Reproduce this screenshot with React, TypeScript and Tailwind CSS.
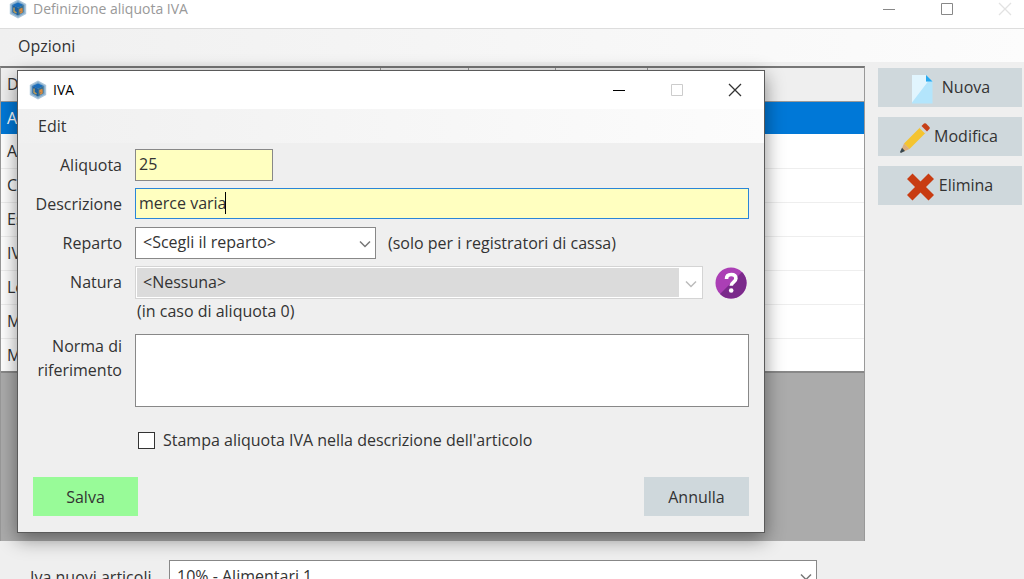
import type { ReactNode } from "react"

const rows = ["A", "A", "C", "Es", "IV", "Le", "M", "M"]

function CubeIcon() {
  return (
    <svg viewBox="0 0 18 20" className="h-5 w-[18px] shrink-0" aria-hidden="true">
      <path d="M9 0.5 17.2 5v10L9 19.5 0.8 15V5z" fill="#a9c4d9" />
      <path d="M9 2 15.8 5.8v8.4L9 18 2.2 14.2V5.8z" fill="#7fa9cb" />
      <path d="M9 3.4 14.6 6 9 8.8 3.4 6z" fill="#1b6dbb" />
      <path d="M3.4 6 9 8.8v7.6l-5.6-3.1z" fill="#1d5f9c" />
      <path d="M14.6 6 9 8.8v7.6l5.6-3.1z" fill="#3a6f8e" />
      <path d="M5 8.5v4l2.5 1.5" fill="none" stroke="#b59a5c" strokeWidth="1.5" />
      <path d="M13.5 9.3 11 10.5v1.5l2-.8v1.8l-2.3 1.2" fill="none" stroke="#d98a3d" strokeWidth="1.4" />
    </svg>
  )
}

function PageIcon() {
  return (
    <svg viewBox="0 0 30 30" className="size-[30px]" aria-hidden="true">
      <path d="M4 1H18l6.5 6.5V29.5H4z" fill="#b3e5fc" />
      <path d="M4 1H18v6.5h2L4 28.5z" fill="#e1f5fe" />
      <path d="M18 1l6.5 6.5H18z" fill="#29a9ef" />
    </svg>
  )
}

function PencilIcon() {
  return (
    <svg viewBox="0 0 30 30" className="size-[30px]" aria-hidden="true">
      <path d="M4 20.5 20.5 4l5.5 5.5L9.5 26z" fill="#f4c430" />
      <path d="M4 20.5 9.5 26l-8.2 3.5L.6 28.5z" fill="#dcae7c" />
      <path d="M2 24.8 5 28 .8 30 0 29z" fill="#37474f" />
      <path d="M19.5 5 21.5 3l5.5 5.5-2 2z" fill="#cfd3d6" />
      <path d="M21.5 3 24 .6q1-.8 2 0L29.4 4q.8 1 0 2L27 8.5z" fill="#c63f17" />
    </svg>
  )
}

function CrossIcon() {
  return (
    <svg viewBox="0 0 30 30" className="size-[30px]" aria-hidden="true">
      <path d="M2 7 7.5 1.5 15.5 9.5 23.5 1.5 29 7 21 15 29 23 23.5 28.5 15.5 20.5 7.5 28.5 2 23 10 15z" fill="#c83c12" />
    </svg>
  )
}

function Chevron({ className }: { className: string }) {
  return (
    <svg viewBox="0 0 12 8" className={`pointer-events-none absolute h-2 w-3 ${className}`} aria-hidden="true">
      <path d="M1 1.5 6 6.5 11 1.5" fill="none" stroke="currentColor" strokeWidth="1.5" />
    </svg>
  )
}

function SideButton({ icon, children }: { icon: ReactNode; children: ReactNode }) {
  return (
    <button type="button" className="flex h-[39px] w-full items-center justify-center gap-1 bg-[#cfd8dc] pr-[2px] pb-[2px]">
      <span className="pt-1">{icon}</span>
      {children}
    </button>
  )
}

function WindowControls({ dialog }: { dialog?: boolean }) {
  return (
    <div className={`flex items-center ${dialog ? "text-black" : "text-[#888]"}`}>
      <button type="button" aria-label="Riduci" className="flex w-[58px] justify-center">
        <svg viewBox="0 0 14 14" className="size-[14px]"><path d="M1 7.5h12" stroke="currentColor" /></svg>
      </button>
      <button type="button" aria-label="Ingrandisci" className={`flex w-[58px] justify-center ${dialog ? "text-[#ccc]" : ""}`}>
        <svg viewBox="0 0 14 14" className="size-[14px]"><path d="M1.5 1.5h11v11h-11z" fill="none" stroke="currentColor" /></svg>
      </button>
      <button type="button" aria-label="Chiudi" className={`flex w-[58px] justify-center ${dialog ? "text-[#333]" : "text-[#e2e2e2]"}`}>
        <svg viewBox="0 0 14 14" className="size-[14px]"><path d="M1 1 13 13M13 1 1 13" stroke="currentColor" strokeWidth="1.3" /></svg>
      </button>
    </div>
  )
}

function IvaDialog() {
  return (
    <form
      role="dialog"
      aria-label="IVA"
      className="absolute top-[70px] left-[17px] w-[748px] max-w-full border border-[#5a5a5a] bg-[#efefef] shadow-[0_6px_18px_rgba(0,0,0,0.45)]"
    >
      <div className="flex h-[38px] items-center justify-between bg-white pl-[11px] text-black">
        <div className="flex items-center gap-[6px] pb-px text-sm">
          <CubeIcon />
          IVA
        </div>
        <WindowControls dialog />
      </div>
      <div className="flex h-[34px] items-center bg-linear-to-r from-[#f0f0f0] to-[#fcfcfc] px-5">
        <button type="button">Edit</button>
      </div>

      <div className="grid grid-cols-[104px_1fr] gap-x-[13px] pt-[6px] pr-[15px]">
        <label htmlFor="aliquota" className="pt-1 text-right">Aliquota</label>
        <input
          id="aliquota"
          defaultValue="25"
          className="mb-[7px] h-8 w-[138px] border border-[#888] bg-[#ffffc0] px-[3px] pb-[2px] outline-none"
        />

        <label htmlFor="descrizione" className="pt-1 text-right">Descrizione</label>
        <div className="relative mb-2">
          <input
            id="descrizione"
            defaultValue="merce varia"
            className="block h-[31px] w-full border border-[#2a86d8] bg-[#ffffc0] px-[3px] pb-[2px] outline-none"
          />
          <span className="absolute top-1 left-[90px] h-[22px] w-px bg-black" />
        </div>

        <label htmlFor="reparto" className="pt-1 text-right">Reparto</label>
        <div className="mb-[7px] flex items-center gap-3">
          <div className="relative">
            <select id="reparto" className="block h-8 w-[241px] appearance-none border border-[#888] bg-white px-[7px] pb-[2px] outline-none">
              <option>&lt;Scegli il reparto&gt;</option>
            </select>
            <Chevron className="top-[13px] right-[5px] text-[#777]" />
          </div>
          <span>(solo per i registratori di cassa)</span>
        </div>

        <label htmlFor="natura" className="pt-1 text-right">Natura</label>
        <div className="flex items-center gap-3">
          <div className="relative w-[568px] border border-[#d4d4d4] bg-white p-px">
            <select
              id="natura"
              disabled
              className="block h-[29px] w-[542px] appearance-none bg-[#dbdbdb] px-[6px] pb-[2px] opacity-100 outline-none"
            >
              <option>&lt;Nessuna&gt;</option>
            </select>
            <Chevron className="top-[13px] right-[5px] text-[#bbb]" />
          </div>
          <button type="button" aria-label="Aiuto">
            <svg viewBox="0 0 32 32" className="size-8">
              <circle cx="16" cy="16" r="15.5" fill="#ab3fb5" />
              <path d="M27 5A15.5 15.5 0 0 1 5 27z" fill="#7b2a8b" />
              <path d="M11.5 12c0-3 2-4.5 4.7-4.5 2.9 0 4.7 1.6 4.7 4 0 3.6-4.7 3.6-4.7 7.3" fill="none" stroke="#fff" strokeWidth="3.6" />
              <circle cx="16.2" cy="23.500" r="2.3" fill="#fff" />
            </svg>
          </button>
        </div>

        <p className="col-start-2 mb-[11px] px-[2px]">(in caso di aliquota 0)</p>

        <label htmlFor="norma" className="text-right">
          Norma di
          <br />
          riferimento
        </label>
        <textarea id="norma" className="block h-[73px] w-full resize-none border border-[#888] bg-white outline-none" />

        <label className="col-start-2 mt-[21px] flex items-center gap-2 px-[3px]">
          <input type="checkbox" className="size-[17px] appearance-none border border-[#333] bg-white" />
          Stampa aliquota IVA nella descrizione dell'articolo
        </label>
      </div>

      <div className="flex justify-between px-[15px] pt-[25px] pb-4">
        <button type="button" className="h-[39px] w-[105px] bg-[#98fb98]">Salva</button>
        <button type="button" className="h-[39px] w-[105px] bg-[#cfd8dc]">Annulla</button>
      </div>
    </form>
  )
}

export default function App() {
  return (
    <main className="relative h-screen overflow-hidden bg-[#efefef] font-['Open_Sans','Noto_Sans',sans-serif] text-base text-[#333]">
      <header className="flex h-[29px] items-start justify-between border-b border-[#ddd] bg-white pl-[9px]">
        <div className="-mt-px flex items-center gap-[6px] text-sm text-[#999]">
          <CubeIcon />
          Definizione aliquota IVA
        </div>
        <div className="-mr-[10px] pt-[2px]">
          <WindowControls />
        </div>
      </header>
      <nav className="flex h-[33px] items-center bg-linear-to-r from-[#f0f0f0] to-[#fcfcfc] px-[18px]">
        <button type="button">Opzioni</button>
      </nav>

      <div className="flex gap-[13px] pt-1 pr-[2px]">
        <div className="h-[475px] flex-1 border-t-2 border-r border-l border-t-[#777] border-r-[#999] border-l-[#999] bg-[#ababab]">
          <table className="w-full table-fixed border-collapse border-b-2 border-[#888] bg-white text-left">
            <thead>
              <tr className="h-[33px] border-b border-[#999] bg-[#efefef]">
                <th className="w-[379px] border-r border-[#999] px-[6px] py-0 font-normal">D</th>
                <th className="w-[88px] border-r border-[#999] p-0" />
                <th className="w-[87px] border-r border-[#999] p-0" />
                <th className="w-[92px] border-r border-[#999] p-0" />
                <th className="p-0" />
              </tr>
            </thead>
            <tbody>
              {rows.map((row, i) => (
                <tr key={i} className={i === 0 ? "h-[33px] bg-[#0078d7] text-white" : "h-[34px] border-b border-[#eee]"}>
                  <td colSpan={5} className="px-[6px] py-0">{row}</td>
                </tr>
              ))}
            </tbody>
          </table>
        </div>
        <aside className="flex w-36 flex-col gap-[10px] pt-[2px]">
          <SideButton icon={<PageIcon />}>Nuova</SideButton>
          <SideButton icon={<PencilIcon />}>Modifica</SideButton>
          <SideButton icon={<CrossIcon />}>Elimina</SideButton>
        </aside>
      </div>

      <div className="flex items-center gap-3 pt-[19px] pl-[30px]">
        <label htmlFor="iva-nuovi" className="w-[127px] whitespace-nowrap">Iva nuovi articoli</label>
        <div className="relative">
          <select id="iva-nuovi" className="block h-[34px] w-[648px] appearance-none border border-[#888] bg-white px-[7px] pb-[3px] outline-none">
            <option>10% - Alimentari 1</option>
          </select>
          <Chevron className="top-[13px] right-[5px] text-[#777]" />
        </div>
      </div>

      <IvaDialog />
    </main>
  )
}
